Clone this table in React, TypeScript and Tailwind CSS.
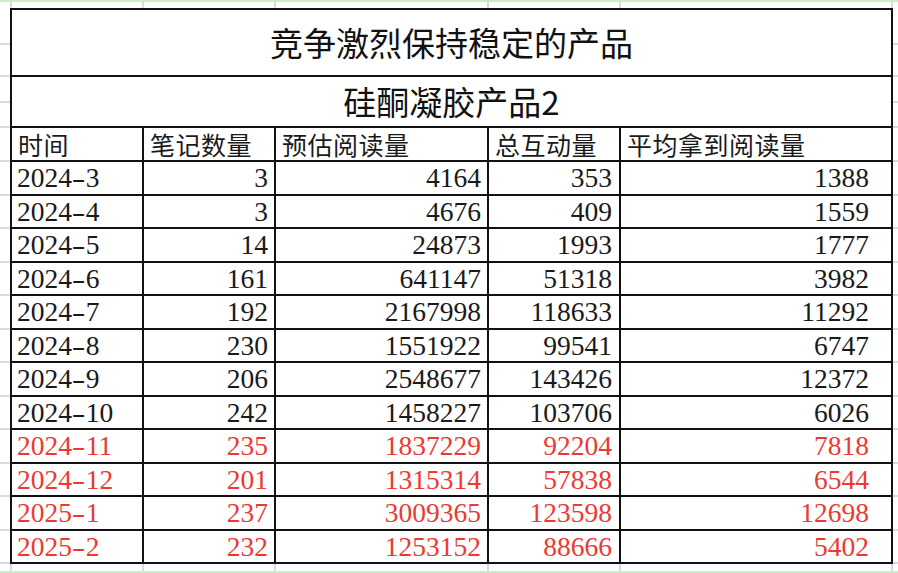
import React from "react";

type Row = [string, string, string, string, string];

const black: Row[] = [
  ["2024-3", "3", "4164", "353", "1388"],
  ["2024-4", "3", "4676", "409", "1559"],
  ["2024-5", "14", "24873", "1993", "1777"],
  ["2024-6", "161", "641147", "51318", "3982"],
  ["2024-7", "192", "2167998", "118633", "11292"],
  ["2024-8", "230", "1551922", "99541", "6747"],
  ["2024-9", "206", "2548677", "143426", "12372"],
  ["2024-10", "242", "1458227", "103706", "6026"],
];
const red: Row[] = [
  ["2024-11", "235", "1837229", "92204", "7818"],
  ["2024-12", "201", "1315314", "57838", "6544"],
  ["2025-1", "237", "3009365", "123598", "12698"],
  ["2025-2", "232", "1253152", "88666", "5402"],
];

const headers = ["时间", "笔记数量", "预估阅读量", "总互动量", "平均拿到阅读量"];

function DateText({ v }: { v: string }) {
  const [a, b] = v.split("-");
  return (
    <span>
      {a}
      <span className="inline-block w-[13.75px] text-center">
        <span className="inline-block scale-x-150">-</span>
      </span>
      {b}
    </span>
  );
}

function DataRow({ row, isRed }: { row: Row; isRed: boolean }) {
  const color = isRed ? "text-[#ec3a32]" : "text-[#1a1a1a]";
  const base =
    "bg-white h-[31.5px] flex items-center text-[27.5px] leading-none font-['Liberation_Serif',serif] " +
    color;
  return (
    <>
      <div className={base + " pl-[5px]"}>
        <DateText v={row[0]} />
      </div>
      <div className={base + " justify-end pr-[6px]"}>{row[1]}</div>
      <div className={base + " justify-end pr-[6px]"}>{row[2]}</div>
      <div className={base + " justify-end pr-[7px]"}>{row[3]}</div>
      <div className={base + " justify-end pr-[22px]"}>{row[4]}</div>
    </>
  );
}

const vlines = [10, 142, 274, 487, 619, 891];
const hticks: number[] = [43, 75, 101, 126, 160];
for (let i = 1; i <= 12; i++) hticks.push(160 + i * 33.5);

export default function App() {
  return (
    <div className="relative w-[898px] h-[573px] bg-white overflow-hidden">
      {/* spreadsheet gridlines peeking out behind the table */}
      <div className="absolute left-0 top-0 w-full h-[1.5px] bg-[#cfe9cf]" />
      <div className="absolute left-0 bottom-0 w-full h-[2px] bg-[#cfe9cf]" />
      {vlines.map((x) => (
        <div
          key={"v" + x}
          className="absolute top-[1px] bottom-[2px] w-[2px] bg-[#dadada]"
          style={{ left: x }}
        />
      ))}
      {hticks.map((y) => (
        <React.Fragment key={"h" + y}>
          <div
            className="absolute left-0 w-[10px] h-[2px] bg-[#dadada]"
            style={{ top: y }}
          />
          <div
            className="absolute right-0 w-[6px] h-[2px] bg-[#dadada]"
            style={{ top: y }}
          />
        </React.Fragment>
      ))}

      <div className="relative ml-[10px] mt-[8px] w-[883px] grid grid-cols-[130px_130px_211px_130px_270px] gap-[2px] bg-[#111] p-[2px]">
        <div className="col-span-5 bg-white h-[65px] flex items-center justify-center text-[33px] leading-none text-[#111] font-['Noto_Sans_CJK_SC','Noto_Sans',sans-serif]">
          竞争激烈保持稳定的产品
        </div>
        <div className="col-span-5 bg-white h-[49px] flex items-center justify-center text-[33px] leading-none text-[#111] font-['Noto_Sans_CJK_SC','Noto_Sans',sans-serif]">
          硅酮凝胶产品2
        </div>
        {headers.map((h) => (
          <div
            key={h}
            className="bg-white h-[32px] flex items-center pl-[6px] text-[25px] tracking-[0.5px] leading-none text-[#1a1a1a] font-['Noto_Sans_CJK_SC','Noto_Sans',sans-serif]"
          >
            {h}
          </div>
        ))}
        {black.map((r) => (
          <DataRow key={r[0]} row={r} isRed={false} />
        ))}
        {red.map((r) => (
          <DataRow key={r[0]} row={r} isRed={true} />
        ))}
      </div>
    </div>
  );
}
